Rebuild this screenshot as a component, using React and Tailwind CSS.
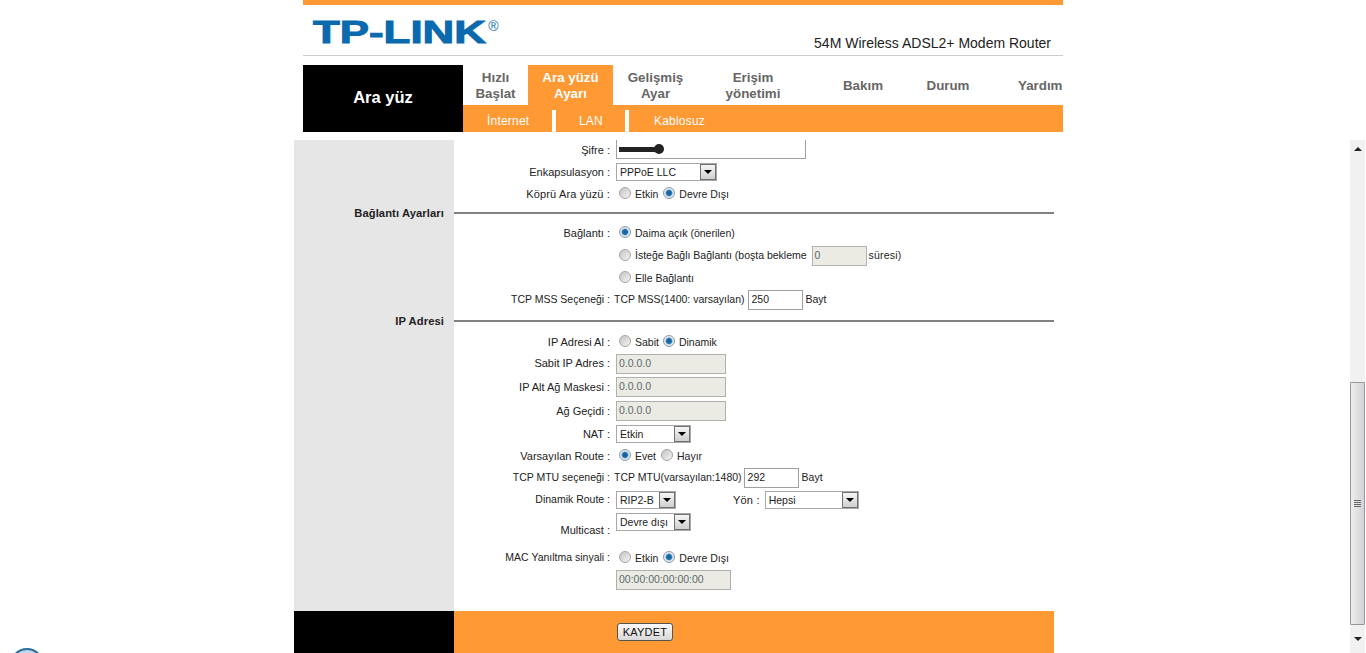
import React from "react";

function Radio({ on }) {
  return (
    <span
      className={
        on
          ? "w-[12px] h-[12px] rounded-full border border-[#8a9aa8] bg-[radial-gradient(circle,#0f5f9e_0%,#1d6fae_35%,#dfe6ec_55%,#f4f4f4_100%)] shrink-0 mb-[2px]"
          : "w-[12px] h-[12px] rounded-full border border-[#a5a5a5] bg-[linear-gradient(135deg,#c4c4c4,#f4f4f4)] shrink-0 mb-[2px]"
      }
    ></span>
  );
}

function Select({ value, className }) {
  return (
    <div className={`h-[18px] flex items-center justify-between border border-[#a8a8a8] bg-white pl-[3px] ${className}`}>
      <span className="whitespace-nowrap mt-[1px]">{value}</span>
      <span className="w-[16px] h-[16px] border border-[#707070] bg-[linear-gradient(#f6f6f6,#cfcfcf)] flex items-center justify-center">
        <span className="w-0 h-0 border-x-[4px] border-x-transparent border-t-[4px] border-t-black"></span>
      </span>
    </div>
  );
}

function Disabled({ value, className }) {
  return (
    <div className={`h-[20px] flex items-center pl-[2px] border border-[#b0b0b0] bg-[#ebebe4] text-[#5a6a6a] ${className}`}>
      {value}
    </div>
  );
}

function TextBox({ value, className }) {
  return (
    <div className={`h-[20px] flex items-center pl-[3px] border border-[#a0a0a0] bg-white ${className}`}>
      {value}
    </div>
  );
}

function Row({ label, labelClass = "text-[11px]", className, children }) {
  return (
    <div className={`flex ${className}`}>
      <div className="w-[160px] bg-[#e6e6e6]"></div>
      <div className={`w-[157px] pr-[1px] text-right self-center whitespace-nowrap ${labelClass}`}>{label}</div>
      <div className="ml-[5px] flex items-center whitespace-nowrap text-[10.5px]">{children}</div>
    </div>
  );
}

function Section({ title, className }) {
  return (
    <div className={`flex items-center ${className}`}>
      <div className="w-[160px] h-full bg-[#e6e6e6] pr-[10px] flex items-center justify-end font-bold text-[11.2px] tracking-[0.1px] text-[#222]">
        {title}
      </div>
      <div className="w-[600px] h-[2px] bg-[#808080]"></div>
    </div>
  );
}

const tabs = [
  { text: ["Hızlı", "Başlat"], w: "w-[65px]" },
  { text: ["Ara yüzü", "Ayarı"], w: "w-[85px]", active: true },
  { text: ["Gelişmiş", "Ayar"], w: "w-[85px]" },
  { text: ["Erişim", "yönetimi"], w: "w-[110px]" },
  { text: ["Bakım"], w: "w-[110px]" },
  { text: ["Durum"], w: "w-[60px]" },
  { text: ["Yardım"], w: "w-[85px] pl-[40px] items-start" },
];

export default function App() {
  return (
    <div className="relative w-[1366px] h-[653px] overflow-hidden bg-white flex flex-col font-['Liberation_Sans',Arial,sans-serif] text-[11px] text-[#222]">
      {/* top frame */}
      <div className="w-[760px] ml-[303px] h-[140px] shrink-0">
        <div className="h-[5px] bg-[#ff9933]"></div>
        <div className="h-[51px] border-b border-[#cccccc] flex justify-between pl-[10px] pr-[12px]">
          <div className="pt-[8px] flex items-start">
            <span className="text-[32px] leading-[38px] font-bold text-[#0b6aae] scale-x-[1.37] origin-left [-webkit-text-stroke:1px_#0b6aae] whitespace-nowrap">
              TP-LINK
            </span>
            <span className="ml-[49px] mt-[6px] text-[14px] leading-none text-[#0b6aae]">®</span>
          </div>
          <div className="self-end pb-[4px] text-[14px] leading-[16px] text-[#222] whitespace-nowrap">
            54M Wireless ADSL2+ Modem Router
          </div>
        </div>
        <div className="mt-[9px] h-[67px] flex">
          <div className="w-[160px] bg-black text-white font-bold text-[16.5px] pb-[2px] flex items-center justify-center">
            Ara yüz
          </div>
          <div className="w-[600px] flex flex-col">
            <div className="h-[40px] flex">
              {tabs.map((t) => (
                <div
                  key={t.text[0]}
                  className={`${t.w} pt-[2px] flex flex-col justify-center items-center text-[13.33px] leading-[16px] font-bold whitespace-nowrap ${
                    t.active ? "bg-[#ff9933] text-white" : "text-[#666666]"
                  }`}
                >
                  {t.text.map((l) => (
                    <span key={l}>{l}</span>
                  ))}
                </div>
              ))}
            </div>
            <div className="h-[27px] bg-[#ff9933] flex text-white text-[12px] tracking-[0.2px]">
              <div className="w-[89px] pl-[24px] pt-[7px]">İnternet</div>
              <div className="w-[4px] mt-[5px] bg-white"></div>
              <div className="w-[69px] pl-[23px] pt-[7px]">LAN</div>
              <div className="w-[4px] mt-[5px] bg-white"></div>
              <div className="pl-[25px] pt-[7px]">Kablosuz</div>
            </div>
          </div>
        </div>
      </div>

      {/* content frame */}
      <div className="flex-1 flex min-h-0">
        <div className="w-[760px] ml-[294px] flex flex-col">
          <Row label="Şifre :" className="h-[21px]">
            <div className="w-[190px] h-[19px] self-start border-l border-r border-b border-[#a0a0a0] flex items-center pl-[2px]">
              <span className="w-[38px] h-[5px] bg-[#222]"></span>
              <span className="w-[10px] h-[10px] -ml-[3px] rounded-full bg-[#222]"></span>
            </div>
          </Row>
          <Row label="Enkapsulasyon :" className="h-[22px]">
            <Select value="PPPoE LLC" className="w-[101px]" />
          </Row>
          <Row label="Köprü Ara yüzü :" labelClass="text-[11px] tracking-[0.15px]" className="h-[22px]">
            <span className="ml-[3px] mr-[4px] flex items-center">
              <Radio />
            </span>
            <span className="mt-[2px]">Etkin</span>
            <span className="ml-[5px] mr-[4px] flex items-center">
              <Radio on />
            </span>
            <span className="mt-[2px]">Devre Dışı</span>
          </Row>
          <Section title="Bağlantı Ayarları" className="h-[16px]" />
          <Row label="Bağlantı :" className="h-[24px]">
            <span className="ml-[3px] mr-[4px] flex items-center">
              <Radio on />
            </span>
            <span className="mt-[2px]">Daima açık (önerilen)</span>
          </Row>
          <Row label="" className="h-[21px]">
            <span className="ml-[3px] mr-[4px] flex items-center">
              <Radio />
            </span>
            <span>İsteğe Bağlı Bağlantı (boşta bekleme</span>
            <Disabled value="0" className="w-[55px] ml-[5px] mr-[2px]" />
            <span className="tracking-[0.2px]">süresi)</span>
          </Row>
          <Row label="" className="h-[23px]">
            <span className="ml-[3px] mr-[4px] flex items-center">
              <Radio />
            </span>
            <span className="mt-[2px]">Elle Bağlantı</span>
          </Row>
          <Row label="TCP MSS Seçeneği :" labelClass="text-[10.5px]" className="h-[21px]">
            <span className="-ml-[2px]">TCP MSS(1400: varsayılan)</span>
            <TextBox value="250" className="w-[55px] ml-[3px] mr-[2px]" />
            <span className="ml-[1px]">Bayt</span>
          </Row>
          <Section title="IP Adresi" className="h-[22px]" />
          <Row label="IP Adresi Al :" className="h-[20px]">
            <span className="ml-[3px] mr-[4px] flex items-center">
              <Radio />
            </span>
            <span className="mt-[2px]">Sabit</span>
            <span className="ml-[4px] mr-[4px] flex items-center">
              <Radio on />
            </span>
            <span className="mt-[2px]">Dinamik</span>
          </Row>
          <Row label="Sabit IP Adres :" className="h-[23px]">
            <Disabled value="0.0.0.0" className="w-[110px]" />
          </Row>
          <Row label="IP Alt Ağ Maskesi :" className="h-[24px]">
            <Disabled value="0.0.0.0" className="w-[110px]" />
          </Row>
          <Row label="Ağ Geçidi :" className="h-[24px]">
            <Disabled value="0.0.0.0" className="w-[110px]" />
          </Row>
          <Row label="NAT :" className="h-[22px]">
            <Select value="Etkin" className="w-[75px]" />
          </Row>
          <Row label="Varsayılan Route :" className="h-[22px]">
            <span className="ml-[3px] mr-[4px] flex items-center">
              <Radio on />
            </span>
            <span className="mt-[2px]">Evet</span>
            <span className="ml-[5px] mr-[4px] flex items-center">
              <Radio />
            </span>
            <span className="mt-[2px]">Hayır</span>
          </Row>
          <Row label="TCP MTU seçeneği :" labelClass="text-[10.5px]" className="h-[21px]">
            <span className="-ml-[2px]">TCP MTU(varsayılan:1480)</span>
            <TextBox value="292" className="w-[55px] ml-[2px] mr-[2px]" />
            <span className="ml-[1px]">Bayt</span>
          </Row>
          <Row label="Dinamik Route :" labelClass="text-[10.5px]" className="h-[24px]">
            <Select value="RIP2-B" className="w-[60px]" />
            <span className="ml-[57px] mr-[5px] text-[11px] tracking-[0.2px]">Yön :</span>
            <Select value="Hepsi" className="w-[94px]" />
          </Row>
          <Row label="Multicast :" className="h-[33px] [&>div:nth-child(2)]:mt-[4px]">
            <Select value="Devre dışı" className="w-[75px] self-start mt-[1px]" />
          </Row>
          <Row label="MAC Yanıltma sinyali :" labelClass="text-[10.5px]" className="h-[25px]">
            <span className="ml-[3px] mr-[4px] flex items-center">
              <Radio />
            </span>
            <span className="mt-[2px]">Etkin</span>
            <span className="ml-[5px] mr-[4px] flex items-center">
              <Radio on />
            </span>
            <span className="mt-[2px]">Devre Dışı</span>
          </Row>
          <Row label="" className="h-[20px]">
            <Disabled value="00:00:00:00:00:00" className="w-[115px] -mt-[1px]" />
          </Row>
          <Row label="" className="h-[21px]"></Row>
          <div className="h-[42px] flex">
            <div className="w-[160px] bg-black"></div>
            <div className="w-[600px] bg-[#ff9933] pl-[163px] pt-[12px]">
              <div className="w-[56px] h-[18px] rounded-[3px] border border-[#555] bg-[linear-gradient(#fafafa,#d8d8d8)] flex items-center justify-center text-[11px] text-[#111] tracking-[0.2px]">
                KAYDET
              </div>
            </div>
          </div>
        </div>

        {/* scrollbar */}
        <div className="ml-auto mr-[1px] w-[15px] bg-[#f1f1f1] flex flex-col items-center">
          <div className="h-[17px] flex items-center justify-center">
            <span className="w-0 h-0 border-x-[4px] border-x-transparent border-b-[4px] border-b-[#222]"></span>
          </div>
          <div className="mt-[225px] w-full h-[243px] border border-[#979797] rounded-[1px] bg-[linear-gradient(90deg,#eeeeee,#d2d2d8)] flex flex-col items-center justify-center gap-[1px]">
            <span className="w-[7px] h-[1px] bg-[#666]"></span>
            <span className="w-[7px] h-[1px] bg-[#666]"></span>
            <span className="w-[7px] h-[1px] bg-[#666]"></span>
            <span className="w-[7px] h-[1px] bg-[#666]"></span>
          </div>
          <div className="flex-1 flex items-center justify-center">
            <span className="w-0 h-0 border-x-[4px] border-x-transparent border-t-[4px] border-t-[#222]"></span>
          </div>
        </div>
      </div>

      {/* taskbar orb peeking in */}
      <div className="absolute left-[10px] top-[648px] w-[34px] h-[34px] rounded-full border-2 border-[#2a6ea0] bg-[#c4d6e6]"></div>
    </div>
  );
}
